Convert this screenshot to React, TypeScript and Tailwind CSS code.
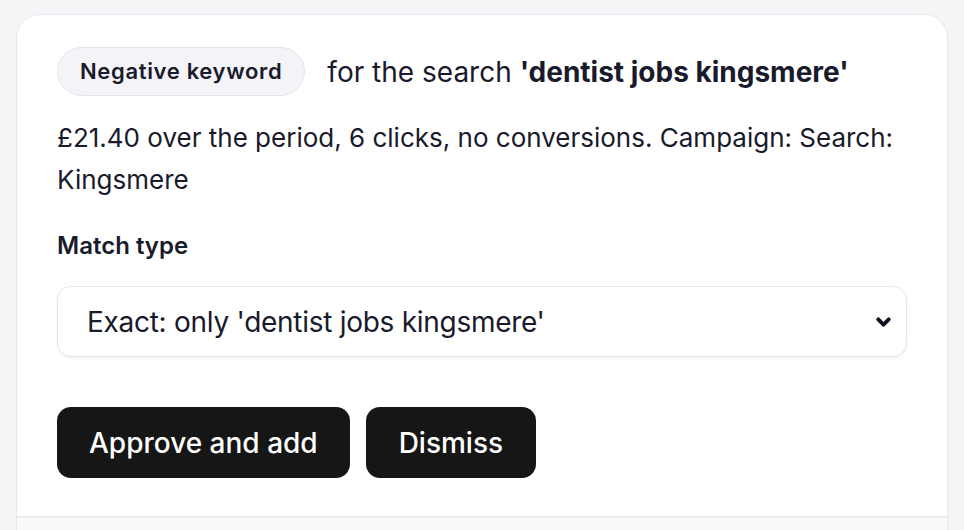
import { ChevronDown } from "lucide-react";

// Review card for a single suggested negative keyword.
const TERM = "dentist jobs kingsmere";

export default function App() {
  return (
    <div className="min-h-screen bg-[#f5f5f7] px-4 pt-[14px] font-['Inter',sans-serif] text-[#191a2c]">
      <div className="overflow-hidden rounded-t-[24px] border border-[#e8e9ee] bg-white">
        <div className="px-[40px] pt-[32px] pb-[38px]">
          <div className="flex items-center gap-[22px]">
            <span className="flex h-[49px] items-center rounded-full border border-[#e3e4ea] bg-[#f4f4f8] px-[22px] text-[22px] font-semibold tracking-[0.03em]">
              Negative keyword
            </span>
            <span className="text-[28px]">
              for the search <span className="font-bold">'{TERM}'</span>
            </span>
          </div>

          <p className="mt-[21px] text-[26px] leading-[42px]">
            £21.40 over the period, 6 clicks, no conversions. Campaign: Search: Kingsmere
          </p>

          <label className="mt-[31px] block text-[24px] leading-[28px] font-semibold">Match type</label>

          <div className="relative mt-[26px]">
            <select
              defaultValue="exact"
              className="h-[71px] w-full appearance-none rounded-[14px] border border-[#e6e7ec] bg-white pl-[29px] pr-[60px] text-[28px] tracking-[-0.01em] text-[#191a2c] shadow-[0_1px_3px_rgba(0,0,0,0.06)] focus:outline-none"
            >
              <option value="exact">Exact: only '{TERM}'</option>
              <option value="phrase">Phrase: contains '{TERM}'</option>
            </select>
            <ChevronDown
              className="pointer-events-none absolute right-[13px] top-1/2 h-[21px] w-[21px] -translate-y-1/2 text-[#111322]"
              strokeWidth={4.5}
            />
          </div>

          <div className="mt-[50px] flex gap-[16px]">
            <button className="h-[71px] rounded-[14px] bg-[#161616] px-[32px] text-[28px] font-medium text-white">
              Approve and add
            </button>
            <button className="h-[71px] rounded-[14px] bg-[#161616] px-[33px] text-[28px] font-medium text-white">
              Dismiss
            </button>
          </div>
        </div>
        <div className="h-[40px] border-t-2 border-[#ececef] bg-[#fafafb]" />
      </div>
    </div>
  );
}
